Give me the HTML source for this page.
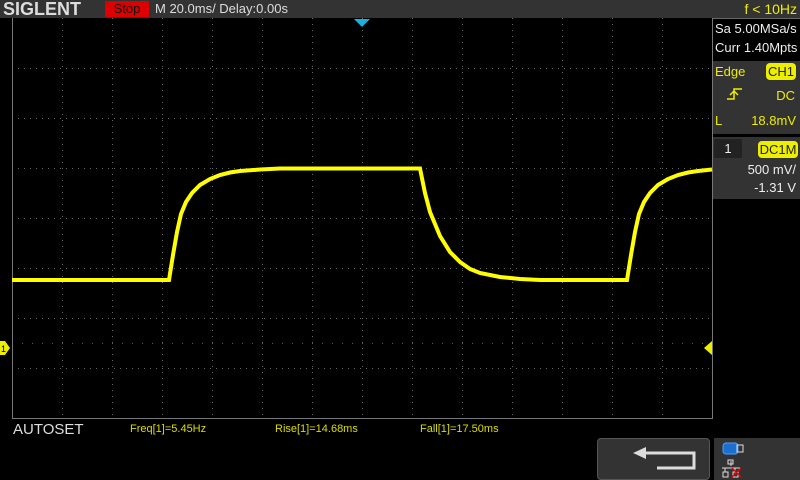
<!DOCTYPE html>
<html><head><meta charset="utf-8"><style>
body{margin:0;width:800px;height:480px;background:#000;overflow:hidden;position:relative;font-family:"Liberation Sans",sans-serif}
.a{position:absolute}
</style></head><body>
<div class="a" style="left:0;top:0;width:800px;height:18px;background:#333"></div>
<div class="a" style="left:3px;top:-1px;font:bold 18px 'Liberation Sans';color:#ddd;line-height:20px">SIGLENT</div>
<div class="a" style="left:105px;top:1px;width:44px;height:16px;background:#d00;color:#111;font-size:13px;line-height:16px;text-align:center">Stop</div>
<div class="a" style="left:155px;top:1px;color:#ddd;font-size:13px;line-height:16px">M 20.0ms/ Delay:0.00s</div>
<div class="a" style="right:3px;top:0px;color:#ee0;font-size:14px;line-height:18px">f &lt; 10Hz</div>
<svg class="a" style="left:0;top:0" width="800" height="480">
<g stroke="#666" stroke-width="1" stroke-dasharray="1,5" fill="none">
<path d="M62.5 18V418M112.5 18V418M162.5 18V418M212.5 18V418M262.5 18V418M312.5 18V418M362.5 18V418M412.5 18V418M462.5 18V418M512.5 18V418M562.5 18V418M612.5 18V418M662.5 18V418"/>
<path d="M12 68.5H712M12 118.5H712M12 168.5H712M12 218.5H712M12 268.5H712M12 318.5H712M12 368.5H712"/>
</g>
<path d="M12 343.5H712" stroke="#555" stroke-dasharray="1,9"/>
<path d="M12.5 18V418.5H712.5V18" stroke="#777" fill="none"/>
<polygon points="354,19 370,19 362,27" fill="#1ab0e0"/>
<polygon points="712,341 704,348 712,355" fill="#ee0"/>
<polygon points="0,341 5,341 10,348 5,355 0,355" fill="#ee0"/>
<text x="1" y="352" font-size="9" fill="#000" font-family="Liberation Sans">1</text>
<polyline fill="none" stroke="#ff0" stroke-width="4" points="12,280 169,280 173,255 177,232 181,214 186,202 192,193 200,185 210,179 220,175 230,172.5 240,171 260,169.5 280,168.5 420,168.5 425,193 430,212 440,236 450,252 460,262 470,269 480,273 500,277 520,279 540,280 627,280 631,255 635,232 639,214 644,202 650,193 658,185 668,179 678,175 688,172.5 698,171 712,169.5"/>
</svg>
<div class="a" style="left:713px;top:18px;width:87px;height:44px;background:#000;border-top:1px solid #666"></div>
<div class="a" style="left:715px;top:21px;color:#eee;font-size:13px">Sa 5.00MSa/s</div>
<div class="a" style="left:715px;top:40px;color:#eee;font-size:13px">Curr 1.40Mpts</div>
<div class="a" style="left:713px;top:61px;width:87px;height:73px;background:#333"></div>
<div class="a" style="left:715px;top:64px;color:#ee0;font-size:13px">Edge</div>
<div class="a" style="left:766px;top:63px;width:30px;height:17px;background:#ee0;border-radius:4px;color:#222;font-size:13px;line-height:17px;text-align:center">CH1</div>
<svg class="a" style="left:725px;top:86px" width="20" height="16"><path d="M2 13H9V3H17M5 9L9 5L13 9" stroke="#ee0" stroke-width="1.5" fill="none"/></svg>
<div class="a" style="right:5px;top:88px;color:#ee0;font-size:13px">DC</div>
<div class="a" style="left:715px;top:113px;color:#ee0;font-size:13px">L</div>
<div class="a" style="right:4px;top:113px;color:#ee0;font-size:13px">18.8mV</div>
<div class="a" style="left:713px;top:137px;width:87px;height:62px;background:#333"></div>
<div class="a" style="left:714px;top:139px;width:28px;height:19px;background:#222;color:#eee;font-size:13px;line-height:19px;text-align:center">1</div>
<div class="a" style="left:758px;top:141px;width:40px;height:17px;background:#ee0;border-radius:4px;color:#222;font-size:13px;line-height:17px;text-align:center">DC1M</div>
<div class="a" style="right:4px;top:162px;color:#eee;font-size:13px">500 mV/</div>
<div class="a" style="right:4px;top:180px;color:#eee;font-size:13px">-1.31 V</div>
<div class="a" style="left:13px;top:421px;color:#ddd;font-size:15px">AUTOSET</div>
<div class="a" style="left:130px;top:423px;color:#dd0;font-size:11px">Freq[1]=5.45Hz</div>
<div class="a" style="left:275px;top:423px;color:#dd0;font-size:11px">Rise[1]=14.68ms</div>
<div class="a" style="left:420px;top:423px;color:#dd0;font-size:11px">Fall[1]=17.50ms</div>
<div class="a" style="left:597px;top:438px;width:113px;height:42px;background:#333;border:1px solid #555;border-radius:4px;box-sizing:border-box"></div>
<svg class="a" style="left:630px;top:445px" width="70" height="28"><path d="M16 8H64V23H27" stroke="#ddd" stroke-width="3" fill="none"/><polygon points="3,8 16,2 16,14" fill="#ddd"/></svg>
<div class="a" style="left:714px;top:438px;width:86px;height:42px;background:#333"></div>
<svg class="a" style="left:720px;top:440px" width="40" height="40"><rect x="3" y="3" width="15" height="11" rx="3" fill="#1a6fd0" stroke="#4aa0ff"/><rect x="17" y="5" width="6" height="7" fill="none" stroke="#ddd"/><path d="M11 21v5M2 28h18M5 28v4M15 28v4" stroke="#ddd" fill="none"/><rect x="8" y="20" width="5" height="4" fill="none" stroke="#ddd"/><rect x="3" y="32" width="5" height="5" fill="none" stroke="#ddd"/><rect x="13" y="32" width="5" height="5" fill="none" stroke="#ddd"/><path d="M12 28l9 9M21 28l-9 9" stroke="#e00" stroke-width="1.3"/></svg>
</body></html>
